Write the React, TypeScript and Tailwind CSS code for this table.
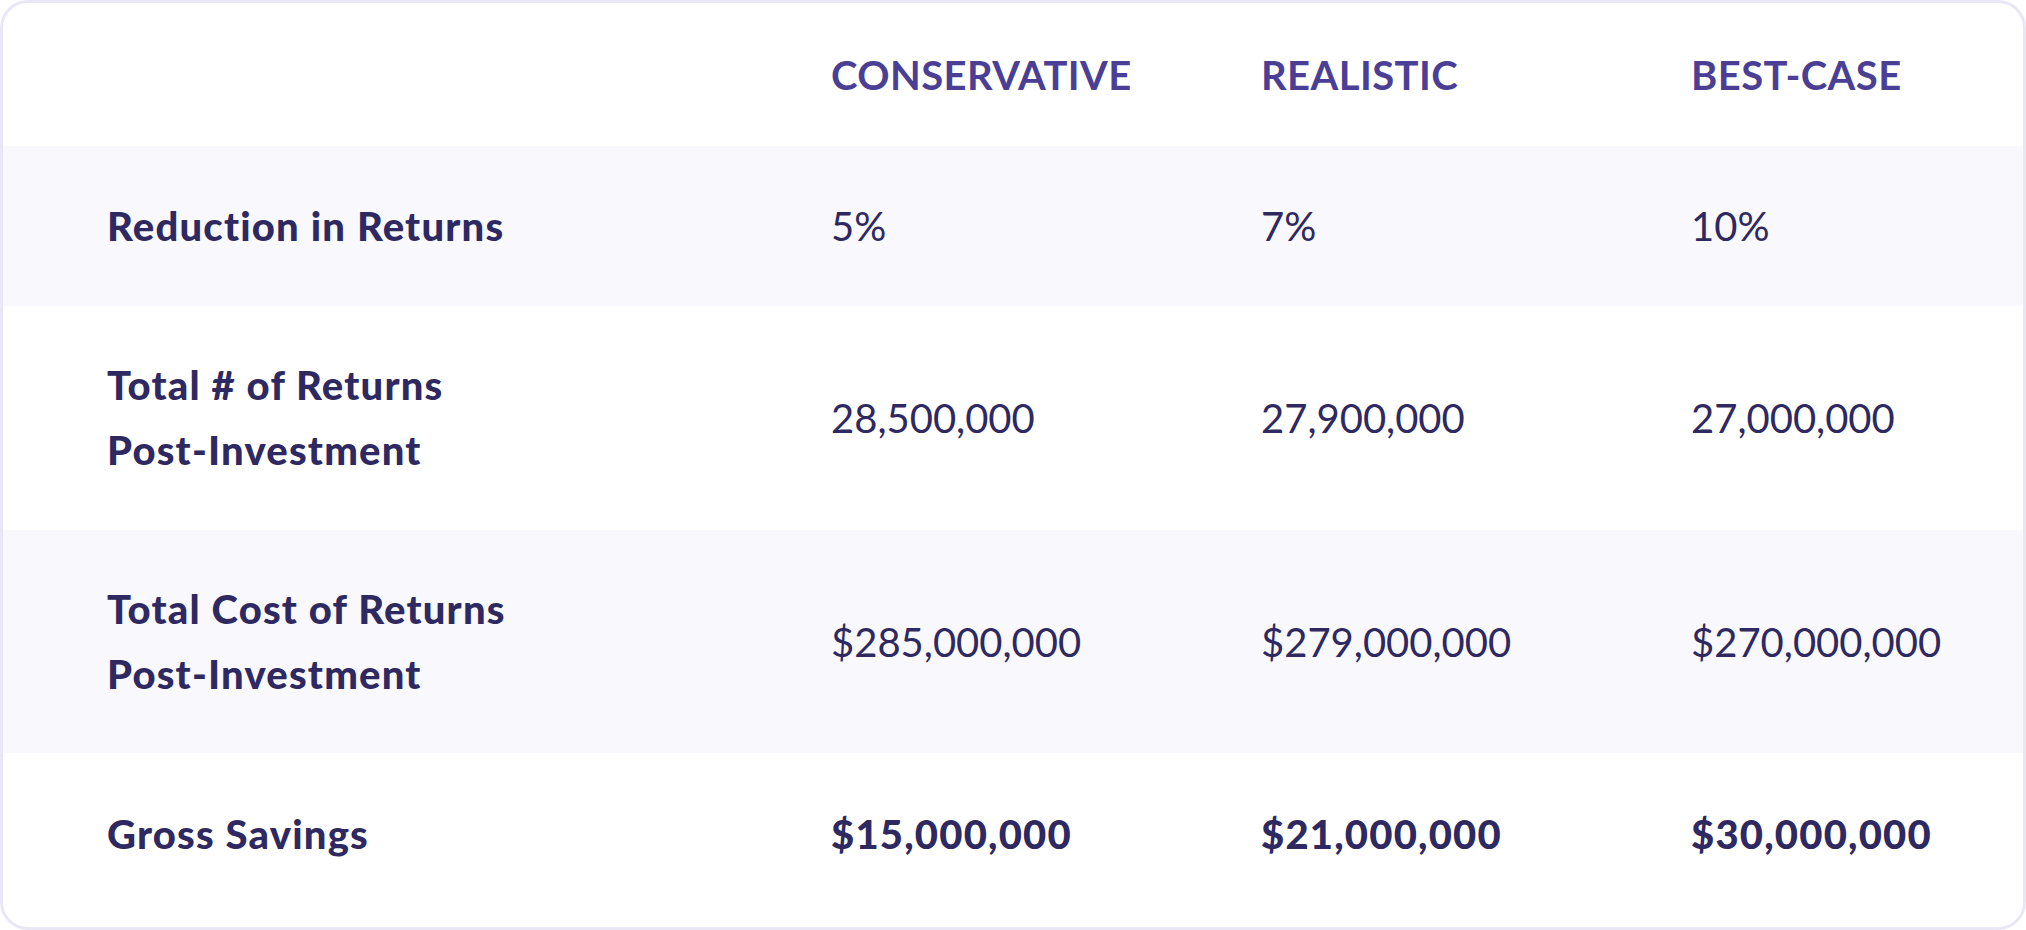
const headers = ["Conservative", "Realistic", "Best-Case"];

type Row = {
  label: string[];
  values: string[];
  shaded: boolean;
  height: string;
  strong?: boolean;
};

const rows: Row[] = [
  {
    label: ["Reduction in Returns"],
    values: ["5%", "7%", "10%"],
    shaded: true,
    height: "h-[160px]",
  },
  {
    label: ["Total # of Returns", "Post-Investment"],
    values: ["28,500,000", "27,900,000", "27,000,000"],
    shaded: false,
    height: "h-[224px]",
  },
  {
    label: ["Total Cost of Returns", "Post-Investment"],
    values: ["$285,000,000", "$279,000,000", "$270,000,000"],
    shaded: true,
    height: "h-[223px]",
  },
  {
    label: ["Gross Savings"],
    values: ["$15,000,000", "$21,000,000", "$30,000,000"],
    shaded: false,
    height: "h-[162px]",
    strong: true,
  },
];

export default function App() {
  return (
    <div className="h-[930px] w-[2026px] bg-white font-['Lato',sans-serif]">
      <div className="h-full w-full overflow-hidden rounded-[28px] border-[3px] border-[#e9e7f6] bg-white text-[40px] text-[#2e2960]">
        {/* header */}
        <div className="grid h-[143px] grid-cols-[724px_430px_430px_1fr] items-center pl-[104px]">
          <div />
          {headers.map((h) => (
            <div key={h} className="font-bold uppercase tracking-[0.01em] text-[#4a3f95]">
              {h}
            </div>
          ))}
        </div>

        {rows.map((row) => (
          <div
            key={row.label.join(" ")}
            className={`grid grid-cols-[724px_430px_430px_1fr] items-center pl-[104px] ${row.height} ${
              row.shaded ? "bg-[#f9f8fd]" : "bg-white"
            }`}
          >
            <div className="font-black leading-[65px] tracking-[0.03em]">
              {row.label.map((l) => (
                <div key={l}>{l}</div>
              ))}
            </div>
            {row.values.map((v) => (
              <div key={v} className={row.strong ? "font-black tracking-[0.03em]" : "font-normal"}>
                {v}
              </div>
            ))}
          </div>
        ))}
      </div>
    </div>
  );
}
